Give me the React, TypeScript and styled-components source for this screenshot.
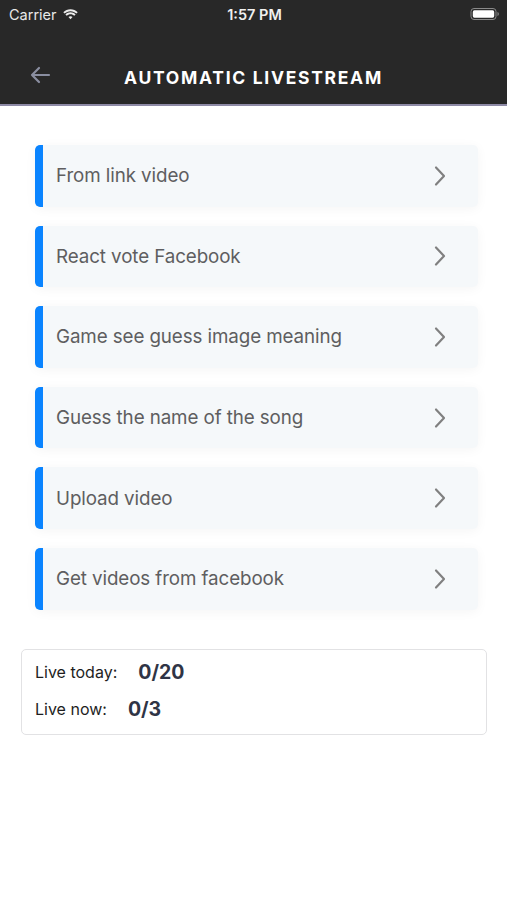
import React from "react";
import styled, { createGlobalStyle } from "styled-components";

const Global = createGlobalStyle`
  html, body { margin: 0; padding: 0; background: #ffffff; }
  body { font-family: Inter, "Open Sans", "Liberation Sans", sans-serif; -webkit-font-smoothing: antialiased; }
`;

const Page = styled.div`
  width: 507px;
  min-height: 900px;
  background: #ffffff;
  display: flex;
  flex-direction: column;
`;

const Header = styled.header`
  background: #282828;
  border-bottom: 2px solid #8e8aa6;
  display: flex;
  flex-direction: column;
`;

const StatusBar = styled.div`
  height: 28px;
  display: grid;
  grid-template-columns: 1fr auto 1fr;
  align-items: center;
  padding: 0 7px 0 9px;
  color: #ffffff;
  font-size: 14.5px;
`;

const Carrier = styled.div`
  display: flex;
  align-items: center;
  gap: 5px;
  font-weight: 400;
  color: #e8e8e8;
`;

const Clock = styled.div`
  font-weight: 600;
  color: #f0f0f0;
`;

const BatteryWrap = styled.div`
  justify-self: end;
  display: flex;
  align-items: center;
`;

const NavBar = styled.div`
  height: 76px;
  position: relative;
  display: flex;
  align-items: center;
  justify-content: center;
`;

const BackButton = styled.div`
  position: absolute;
  left: 29px;
  top: 38px;
  display: flex;
`;

const Title = styled.h1`
  margin: 0;
  padding-top: 23px;
  font-size: 17.5px;
  font-weight: 700;
  letter-spacing: 1.7px;
  color: #ffffff;
`;

const List = styled.div`
  display: flex;
  flex-direction: column;
  gap: 19px;
  padding: 39px 29px 0 35px;
`;

const Card = styled.div`
  height: 61.6px;
  display: flex;
  align-items: center;
  background: #f5f8fa;
  border-radius: 5px;
  box-shadow: 0 2px 12px rgba(0, 0, 0, 0.045);
  overflow: hidden;
`;

const Accent = styled.div`
  width: 8px;
  align-self: stretch;
  background: #0a84ff;
  border-radius: 4px 0 0 4px;
`;

const Label = styled.div`
  flex: 1;
  padding-left: 13px;
  font-size: 18.8px;
  color: #5e5e60;
  letter-spacing: -0.1px;
`;

const Chevron = styled.div`
  display: flex;
  margin-right: 31px;
`;

const Stats = styled.div`
  margin: 39px 20px 0 21px;
  border: 1px solid #e2e2e4;
  border-radius: 5px;
  padding: 10px 13px 13px;
  display: flex;
  flex-direction: column;
  gap: 13px;
`;

const StatRow = styled.div<{ $gap: number }>`
  display: flex;
  align-items: center;
  gap: ${(p) => p.$gap}px;
`;

const StatLabel = styled.span`
  font-size: 16px;
  color: #1e1e1e;
`;

const StatValue = styled.span`
  font-size: 19.5px;
  font-weight: 700;
  color: #2f3445;
`;

const items = [
  "From link video",
  "React vote Facebook",
  "Game see guess image meaning",
  "Guess the name of the song",
  "Upload video",
  "Get videos from facebook",
];

export default function App() {
  return (
    <Page>
      <Global />
      <Header>
        <StatusBar>
          <Carrier>
            Carrier
            <svg width="17" height="12" viewBox="0 0 17 12">
              <path d="M8.5 3.2c2.3 0 4.4.9 5.9 2.4l1.3-1.3C13.8 2.4 11.3 1.3 8.5 1.3S3.2 2.4 1.3 4.3l1.3 1.3c1.5-1.5 3.6-2.4 5.9-2.4z" fill="#ececec" />
              <path d="M8.5 6.2c1.5 0 2.8.6 3.8 1.5l1.3-1.3C12.3 5.1 10.5 4.3 8.5 4.3S4.7 5.1 3.4 6.4l1.3 1.3c1-.9 2.3-1.5 3.8-1.5z" fill="#ececec" />
              <path d="M8.5 8.3c.8 0 1.5.3 2 .8L8.5 11.2 6.5 9.1c.5-.5 1.2-.8 2-.8z" fill="#ececec" />
            </svg>
          </Carrier>
          <Clock>1:57 PM</Clock>
          <BatteryWrap>
            <svg width="30" height="14" viewBox="0 0 30 14">
              <rect x="1" y="1.5" width="25" height="11" rx="3" fill="none" stroke="#8a8a8a" strokeWidth="1" />
              <rect x="2.8" y="3.3" width="21.4" height="7.4" rx="1.6" fill="#ffffff" />
              <path d="M27.5 5v4c.8-.3 1.3-1 1.3-2s-.5-1.7-1.3-2z" fill="#8a8a8a" />
            </svg>
          </BatteryWrap>
        </StatusBar>
        <NavBar>
          <BackButton>
            <svg width="22" height="18" viewBox="0 0 22 18">
              <path d="M20 9H3M10 2L3 9l7 7" fill="none" stroke="#8a8ea0" strokeWidth="2.2" strokeLinecap="round" strokeLinejoin="round" />
            </svg>
          </BackButton>
          <Title>AUTOMATIC LIVESTREAM</Title>
        </NavBar>
      </Header>
      <List>
        {items.map((t) => (
          <Card key={t}>
            <Accent />
            <Label>{t}</Label>
            <Chevron>
              <svg width="14" height="22" viewBox="0 0 14 22">
                <path d="M3 2.5l8 8.5-8 8.5" fill="none" stroke="#808080" strokeWidth="2.2" strokeLinecap="round" strokeLinejoin="round" />
              </svg>
            </Chevron>
          </Card>
        ))}
      </List>
      <Stats>
        <StatRow $gap={21}>
          <StatLabel>Live today:</StatLabel>
          <StatValue>0/20</StatValue>
        </StatRow>
        <StatRow $gap={21}>
          <StatLabel>Live now:</StatLabel>
          <StatValue>0/3</StatValue>
        </StatRow>
      </Stats>
    </Page>
  );
}
